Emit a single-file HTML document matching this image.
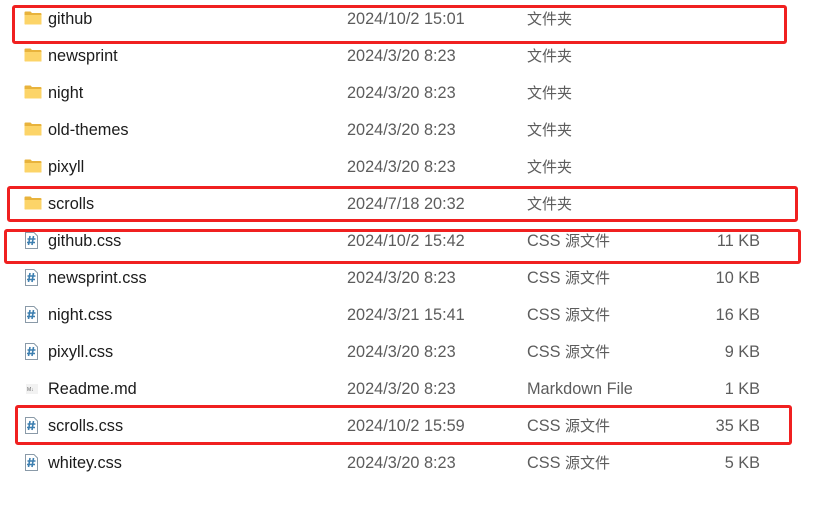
<!DOCTYPE html>
<html><head><meta charset="utf-8"><style>
body{margin:0;width:830px;height:515px;background:#fff;position:relative;overflow:hidden;font-family:"Liberation Sans","Noto Sans CJK SC",sans-serif;font-size:16.3px}
.r{position:absolute;left:0;width:830px;height:37px}
.r span{position:absolute;top:10px;line-height:19px;white-space:nowrap}
.n{left:48px;color:#1b1b1b}
.d{left:347px;color:#5c5c5c}
.t{left:527px;color:#5c5c5c}
.t i{font-style:normal;font-size:15px}
.s{right:70px;color:#5c5c5c}
.fold{position:absolute;left:24px;top:11px;width:18px;height:14px}
.css{position:absolute;left:25px;top:10px;width:13px;height:17px}
.box{position:absolute;border:3px solid #f02020;border-radius:3px;box-sizing:border-box}
</style></head><body>
<svg width="0" height="0" style="position:absolute"><defs>
<symbol id="f" viewBox="0 0 18 14"><path d="M0.5 1.5 Q0.5 0.5 1.5 0.5 H6.5 L8 2 H16.5 Q17.5 2 17.5 3 V13 Q17.5 13.5 16.5 13.5 H1.5 Q0.5 13.5 0.5 12.5Z" fill="#e8b33c"/><path d="M0.5 4 H17.5 V12.5 Q17.5 13.5 16.5 13.5 H1.5 Q0.5 13.5 0.5 12.5Z" fill="#fcd468"/></symbol>
<symbol id="c" viewBox="0 0 13 17"><path d="M0.5 0.5 H9 L12.5 4 V16.5 H0.5Z" fill="#fff" stroke="#8a9aa8"/><path d="M5 4 L3.5 13 M8.5 4 L7 13 M2.5 7 H10.5 M2 10.5 H10" stroke="#3d7fb0" stroke-width="1.6"/></symbol>
</defs></svg>

<div class="r" style="top:0"><svg class="fold"><use href="#f"/></svg><span class="n">github</span><span class="d">2024/10/2 15:01</span><span class="t"><i>文件夹</i></span></div>
<div class="r" style="top:37px"><svg class="fold"><use href="#f"/></svg><span class="n">newsprint</span><span class="d">2024/3/20 8:23</span><span class="t"><i>文件夹</i></span></div>
<div class="r" style="top:74px"><svg class="fold"><use href="#f"/></svg><span class="n">night</span><span class="d">2024/3/20 8:23</span><span class="t"><i>文件夹</i></span></div>
<div class="r" style="top:111px"><svg class="fold"><use href="#f"/></svg><span class="n">old-themes</span><span class="d">2024/3/20 8:23</span><span class="t"><i>文件夹</i></span></div>
<div class="r" style="top:148px"><svg class="fold"><use href="#f"/></svg><span class="n">pixyll</span><span class="d">2024/3/20 8:23</span><span class="t"><i>文件夹</i></span></div>
<div class="r" style="top:185px"><svg class="fold"><use href="#f"/></svg><span class="n">scrolls</span><span class="d">2024/7/18 20:32</span><span class="t"><i>文件夹</i></span></div>
<div class="r" style="top:222px"><svg class="css"><use href="#c"/></svg><span class="n">github.css</span><span class="d">2024/10/2 15:42</span><span class="t">CSS <i>源文件</i></span><span class="s">11 KB</span></div>
<div class="r" style="top:259px"><svg class="css"><use href="#c"/></svg><span class="n">newsprint.css</span><span class="d">2024/3/20 8:23</span><span class="t">CSS <i>源文件</i></span><span class="s">10 KB</span></div>
<div class="r" style="top:296px"><svg class="css"><use href="#c"/></svg><span class="n">night.css</span><span class="d">2024/3/21 15:41</span><span class="t">CSS <i>源文件</i></span><span class="s">16 KB</span></div>
<div class="r" style="top:333px"><svg class="css"><use href="#c"/></svg><span class="n">pixyll.css</span><span class="d">2024/3/20 8:23</span><span class="t">CSS <i>源文件</i></span><span class="s">9 KB</span></div>
<div class="r" style="top:370px"><svg class="css" viewBox="0 0 13 17"><rect x="1" y="4" width="12" height="10" fill="#f2f2f2"/><text x="2" y="11" font-size="5" fill="#666" font-family="Liberation Sans">M↓</text></svg><span class="n">Readme.md</span><span class="d">2024/3/20 8:23</span><span class="t">Markdown File</span><span class="s">1 KB</span></div>
<div class="r" style="top:407px"><svg class="css"><use href="#c"/></svg><span class="n">scrolls.css</span><span class="d">2024/10/2 15:59</span><span class="t">CSS <i>源文件</i></span><span class="s">35 KB</span></div>
<div class="r" style="top:444px"><svg class="css"><use href="#c"/></svg><span class="n">whitey.css</span><span class="d">2024/3/20 8:23</span><span class="t">CSS <i>源文件</i></span><span class="s">5 KB</span></div>

<div class="box" style="left:12px;top:5px;width:775px;height:39px"></div>
<div class="box" style="left:7px;top:186px;width:791px;height:36px"></div>
<div class="box" style="left:4px;top:229px;width:797px;height:35px"></div>
<div class="box" style="left:15px;top:405px;width:777px;height:40px"></div>
</body></html>
